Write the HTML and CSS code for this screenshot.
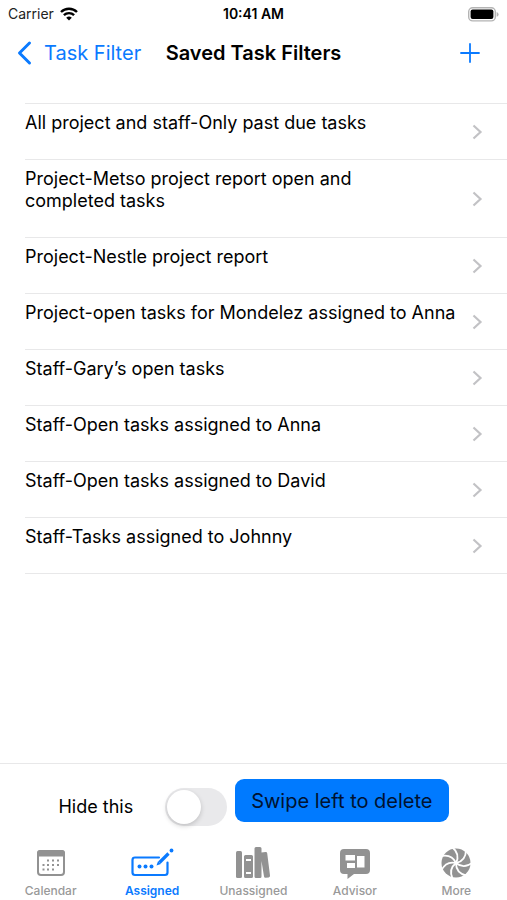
FILE: index.html
```html
<!DOCTYPE html>
<html lang="en">
<head>
<meta charset="utf-8">
<meta name="viewport" content="width=device-width, initial-scale=1">
<title>Saved Task Filters</title>
<link rel="stylesheet" href="styles.css">
</head>
<body>
<div class="status">
  <div class="carrier">
    <span>Carrier</span>
    <svg width="18" height="14" viewBox="0 0 18 14" fill="none" stroke="#000" stroke-width="2.4">
      <path d="M1 5a11.4 11.4 0 0 1 16 0"/>
      <path d="M3.9 8.2a7.3 7.3 0 0 1 10.2 0"/>
      <path d="M9 13.6 6.2 10.8a4 4 0 0 1 5.6 0Z" fill="#000" stroke="none"/>
    </svg>
  </div>
  <time class="clock">10:41 AM</time>
  <svg class="battery" width="31" height="15" viewBox="0 0 31 15">
    <rect x="0.7" y="0.7" width="26.6" height="13.2" rx="4" fill="#fff" stroke="#b4b4b4" stroke-width="1.4"/>
    <rect x="2.6" y="2.6" width="22.8" height="9.4" rx="2" fill="#000"/>
    <path d="M28.6 5q2 .6 2 2.4t-2 2.4Z" fill="#b4b4b4"/>
  </svg>
</div>

<header class="nav">
  <a class="back" href="#filter">
    <svg width="15" height="24" viewBox="0 0 15 24" fill="none" stroke="#0a7aff" stroke-width="3" stroke-linecap="round" stroke-linejoin="round"><path d="M12.5 2 2.5 12l10 10"/></svg>
    <span>Task Filter</span>
  </a>
  <h1>Saved Task Filters</h1>
  <button class="add" type="button" aria-label="Add filter">
    <svg width="20" height="20" viewBox="0 0 20 20" stroke="#0a7aff" stroke-width="1.8" stroke-linecap="round"><path d="M10 1v18M1 10h18"/></svg>
  </button>
</header>

<main>
  <ul class="filters">
    <li><a href="#f1"><span>All project and staff-Only past due tasks</span><svg class="chevron" viewBox="0 0 10 16"><path d="m1.5 1.5 7 6.5-7 6.5"/></svg></a></li>
    <li><a href="#f2"><span>Project-Metso project report open and<br>completed tasks</span><svg class="chevron" viewBox="0 0 10 16"><path d="m1.5 1.5 7 6.5-7 6.5"/></svg></a></li>
    <li><a href="#f3"><span>Project-Nestle project report</span><svg class="chevron" viewBox="0 0 10 16"><path d="m1.5 1.5 7 6.5-7 6.5"/></svg></a></li>
    <li><a href="#f4"><span>Project-open tasks for Mondelez assigned to Anna</span><svg class="chevron" viewBox="0 0 10 16"><path d="m1.5 1.5 7 6.5-7 6.5"/></svg></a></li>
    <li><a href="#f5"><span>Staff-Gary’s open tasks</span><svg class="chevron" viewBox="0 0 10 16"><path d="m1.5 1.5 7 6.5-7 6.5"/></svg></a></li>
    <li><a href="#f6"><span>Staff-Open tasks assigned to Anna</span><svg class="chevron" viewBox="0 0 10 16"><path d="m1.5 1.5 7 6.5-7 6.5"/></svg></a></li>
    <li><a href="#f7"><span>Staff-Open tasks assigned to David</span><svg class="chevron" viewBox="0 0 10 16"><path d="m1.5 1.5 7 6.5-7 6.5"/></svg></a></li>
    <li><a href="#f8"><span>Staff-Tasks assigned to Johnny</span><svg class="chevron" viewBox="0 0 10 16"><path d="m1.5 1.5 7 6.5-7 6.5"/></svg></a></li>
  </ul>
</main>

<footer>
  <div class="hint">
    <label for="hide">Hide this</label>
    <input class="switch" type="checkbox" role="switch" id="hide">
    <button class="swipe" type="button">Swipe left to delete</button>
  </div>
  <nav class="tabs">
    <a href="#calendar">
      <svg width="42" height="32" viewBox="0 0 42 32" fill="#929292">
        <rect x="8" y="4" width="26" height="24" rx="3" fill="none" stroke="#929292" stroke-width="2"/>
        <path d="M7 9.500V6q0-3 3-3h22q3 0 3 3v3.500Z"/>
        <path d="M17 13.500h2M22 13.500h2M27 13.500h2M12.500 18h2M17 18h2M22 18h2M27 18h2M12.500 22.500h2M17 22.500h2M22 22.500h2" stroke="#929292" stroke-width="2"/>
      </svg>
      <span>Calendar</span>
    </a>
    <a class="active" href="#assigned" aria-current="page">
      <svg width="42" height="32" viewBox="0 0 42 32" fill="none" stroke="#0a7aff" stroke-width="2.2" stroke-linecap="round" stroke-linejoin="round">
        <path d="M28 10.500H4Q1.500 10.500 1.500 13v12.500Q1.500 28 4 28h30q2.500 0 2.500-2.500V15.500"/>
        <path d="m28.500 15.500 9-9" stroke-width="3.200" stroke-linecap="butt"/>
        <path d="m25.500 18.500 1.600-4.400 2.800 2.800Z" fill="#0a7aff" stroke="none"/>
        <circle cx="40.500" cy="3.500" r="1.900" fill="#0a7aff" stroke="none"/>
        <g fill="#0a7aff" stroke="none"><circle cx="8.500" cy="19.500" r="2"/><circle cx="14.500" cy="19.500" r="2"/><circle cx="20.500" cy="19.500" r="2"/></g>
      </svg>
      <span>Assigned</span>
    </a>
    <a href="#unassigned">
      <svg width="42" height="32" viewBox="0 0 42 32" fill="#929292">
        <rect x="4" y="4" width="6" height="27" rx="1.500"/>
        <path fill-rule="evenodd" d="M13.500 8h6q1.500 0 1.500 1.500v20q0 1.500-1.500 1.500h-6q-1.500 0-1.500-1.500v-20Q12 8 13.500 8Zm.5 4v2h5v-2Zm0 13v2h5v-2Z"/>
        <path d="M22.500 1.500q0-1.500 1.500-1.500h4q1.500 0 1.500 1.500v4l4-.5q1.500-.2 1.700 1.300L38 28.500q.2 1.700-1.300 1.900l-3 .4q-1.500.2-1.700-1.300L29.500 14v15.500q0 1.500-1.500 1.500h-4q-1.500 0-1.500-1.500Z"/>
      </svg>
      <span>Unassigned</span>
    </a>
    <a href="#advisor">
      <svg width="42" height="32" viewBox="0 0 42 32" fill="#929292">
        <path fill-rule="evenodd" d="M10 2h22q4 0 4 4v17q0 4-4 4H20l-6.500 5v-5H10q-4 0-4-4V6q0-4 4-4Zm1.500 6v5.500h9.500V8Zm1.500 8v5h8v-5ZM23 9v11.500h7.500V9Z"/>
      </svg>
      <span>Advisor</span>
    </a>
    <a href="#more">
      <svg width="42" height="32" viewBox="0 0 42 32">
        <circle cx="21" cy="16" r="14.500" fill="#929292"/>
        <g fill="none" stroke="#fff" stroke-width="1.800">
          <path id="blade" d="M21 16Q25.500 7 17 0"/>
          <use href="#blade" transform="rotate(51.430 21 16)"/>
          <use href="#blade" transform="rotate(102.860 21 16)"/>
          <use href="#blade" transform="rotate(154.290 21 16)"/>
          <use href="#blade" transform="rotate(205.710 21 16)"/>
          <use href="#blade" transform="rotate(257.140 21 16)"/>
          <use href="#blade" transform="rotate(308.570 21 16)"/>
        </g>
      </svg>
      <span>More</span>
    </a>
  </nav>
</footer>
</body>
</html>
```
FILE: styles.css
```css
* { box-sizing: border-box; }
body {
  margin: 0;
  min-height: 100vh;
  display: flex;
  flex-direction: column;
  background: #fff;
  color: #000;
  font-family: Inter, "Liberation Sans", sans-serif;
  font-size: 18px;
  line-height: 22px;
}
a { color: inherit; text-decoration: none; }
button { font: inherit; border: 0; padding: 0; background: none; cursor: pointer; }
svg { display: block; flex: none; overflow: visible; }

.status {
  display: grid;
  grid-template-columns: 1fr auto 1fr;
  align-items: center;
  height: 28px;
  padding: 0 8px;
}
.carrier { display: flex; align-items: center; gap: 6px; font-size: 14px; color: #222; }
.clock { font-weight: 600; font-size: 14px; }
.battery { justify-self: end; }

.nav {
  display: grid;
  grid-template-columns: 1fr auto 1fr;
  align-items: center;
  height: 50px;
  padding: 0 17px;
  font-size: 20px;
}
.back { display: flex; align-items: center; gap: 12px; color: #0a7aff; }
.nav h1 { margin: 0; font-size: 20px; font-weight: 600; }
.add { justify-self: end; margin-right: 10px; }

main { flex: 1; padding-top: 25px; }
.filters { margin: 0; padding: 0 0 0 25px; list-style: none; }
.filters li { border-top: 1px solid #e8e8e9; }
.filters li:last-child { border-bottom: 1px solid #e8e8e9; }
.filters a {
  display: flex;
  justify-content: space-between;
  align-items: center;
  padding-right: 25px;
  white-space: nowrap;
}
.filters span { padding: 8px 0 25px; }
.chevron {
  width: 10px;
  height: 16px;
  fill: none;
  stroke: #c2c2c5;
  stroke-width: 2.2;
}

footer { border-top: 1px solid #e8e8e9; }
.hint {
  display: flex;
  justify-content: center;
  align-items: flex-start;
  height: 77px;
  padding-top: 15px;
}
.hint label { padding-top: 17px; margin-right: 32px; }
.switch {
  appearance: none;
  display: flex;
  align-items: center;
  width: 62px;
  height: 38px;
  margin: 9px 8px 0 0;
  padding: 2px;
  border-radius: 19px;
  background: #e9e9eb;
  cursor: pointer;
}
.switch::before {
  content: "";
  width: 34px;
  height: 34px;
  border-radius: 50%;
  background: #fff;
  box-shadow: 0 2px 5px rgba(0, 0, 0, .18);
}
.switch:checked { background: #34c759; justify-content: flex-end; }
.swipe {
  height: 43px;
  padding: 0 16px;
  border-radius: 9px;
  background: #007aff;
  color: #001230;
  font-size: 20px;
}

.tabs { display: grid; grid-template-columns: repeat(5, 1fr); padding-top: 6px; }
.tabs a {
  display: flex;
  flex-direction: column;
  align-items: center;
  gap: 3px;
  color: #999;
  font-size: 12px;
  font-weight: 500;
  line-height: 18px;
}
.tabs .active { color: #0a7aff; font-weight: 600; }
```
